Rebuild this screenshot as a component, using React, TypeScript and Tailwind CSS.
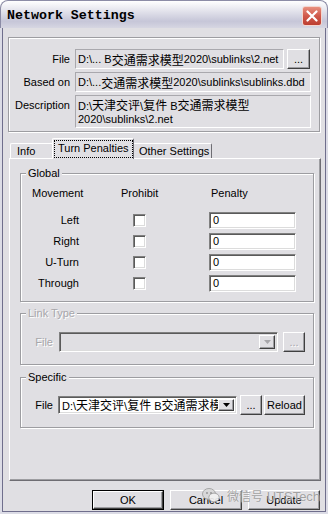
import React from "react";

type Kids = { children?: React.ReactNode; className?: string };

// CJK runs render a bit wider than the latin UI font, like the bitmap font in the dialog
function Z({ children }: Kids) {
  return <span className="text-[12px] font-['Noto_Sans_CJK_SC',sans-serif]">{children}</span>;
}

function RaisedBtn({ children, className = "", disabled = false }: Kids & { disabled?: boolean }) {
  return (
    <div
      className={`flex items-center justify-center border border-t-white border-l-white border-r-[#404040] border-b-[#404040] bg-[#e0dfe3] shadow-[inset_-1px_-1px_0_#9d9da1] ${
        disabled ? "text-[#a7a6aa] [text-shadow:1px_1px_0_#fff]" : "text-black"
      } ${className}`}
    >
      {children}
    </div>
  );
}

function Group({ label, disabled = false, className = "", children }: Kids & { label: string; disabled?: boolean }) {
  return (
    <div className={`relative border border-[#9d9da1] shadow-[inset_1px_1px_0_#fff,1px_1px_0_#fff] ${className}`}>
      <span
        className={`absolute left-[5px] top-[-8px] bg-[#e0dfe3] px-[2px] leading-[14px] ${
          disabled ? "text-[#a7a6aa] [text-shadow:1px_1px_0_#fff]" : "text-black"
        }`}
      >
        {label}
      </span>
      {children}
    </div>
  );
}

function DropArrow({ disabled = false }: { disabled?: boolean }) {
  return (
    <RaisedBtn className="h-full w-[16px] shrink-0">
      <svg width="7" height="4" viewBox="0 0 7 4">
        <path d="M0 0h7L3.5 4z" fill={disabled ? "#a7a6aa" : "#000"} />
      </svg>
    </RaisedBtn>
  );
}

const sunken =
  "border border-t-[#808080] border-l-[#808080] border-r-white border-b-white shadow-[inset_1px_1px_0_#5a5a5a,inset_-1px_-1px_0_#dcdcdc]";

const readonlyField = "border border-t-[#a9a8ad] border-l-[#a9a8ad] border-r-white border-b-white pl-[2px]";

const movements = ["Left", "Right", "U-Turn", "Through"];

export default function App() {
  return (
    <div className="relative flex h-[514px] w-[328px] flex-col font-['Liberation_Sans','Noto_Sans_CJK_SC',sans-serif] text-[11px] leading-[13px] text-black">
      {/* Title bar */}
      <div className="flex h-[28px] shrink-0 items-center justify-between rounded-t-[8px] border border-b-0 border-[#8c8ca6] bg-[linear-gradient(180deg,#ffffff_0%,#ececf2_25%,#c6c6d8_75%,#d6d6e2_100%)] pt-[3px] pl-[6px] pr-[5px]">
        <span className="font-['Liberation_Mono',monospace] text-[13.3px] font-bold leading-none">Network Settings</span>
        <div className="flex h-[20px] w-[20px] items-center justify-center rounded-[3px] border border-[#f3d6cf] bg-[linear-gradient(180deg,#e8907e_0%,#d0584a_50%,#bd3e30_100%)]">
          <svg width="12" height="12" viewBox="0 0 12 12">
            <path d="M1.5 1.5l9 9M10.5 1.5l-9 9" stroke="#fff" strokeWidth="2.2" strokeLinecap="round" />
          </svg>
        </div>
      </div>

      {/* Window frame + body */}
      <div className="flex-1 border-x-2 border-b-2 border-[#dcdce6] bg-[#e0dfe3]">
        <div className="flex h-full flex-col border-x border-b border-[#6f6e8c] bg-[#e0dfe3]">
          {/* Top info box */}
          <div className="mx-[5px] mt-[9px] flex h-[95px] flex-col gap-[3px] border border-[#9d9da1] pt-[11px] shadow-[inset_1px_1px_0_#fff,1px_1px_0_#fff]">
            <div className="flex h-[20px] items-center">
              <div className="w-[61px] text-right">File</div>
              <div className={`ml-[5px] flex h-[20px] w-[209px] items-center whitespace-nowrap ${readonlyField}`}>
                D:\... B<Z>交通需求模型</Z>2020\sublinks\2.net
              </div>
              <RaisedBtn className="ml-[3px] h-[20px] w-[23px]">...</RaisedBtn>
            </div>
            <div className="flex h-[20px] items-center">
              <div className="w-[61px] text-right">Based on</div>
              <div className={`ml-[5px] flex h-[20px] w-[236px] items-center whitespace-nowrap ${readonlyField}`}>
                D:\...<Z>交通需求模型</Z>2020\sublinks\sublinks.dbd
              </div>
            </div>
            <div className="flex h-[33px] items-start">
              <div className="w-[61px] pt-[4px] text-right">Description</div>
              <div className={`ml-[5px] h-[33px] w-[236px] pt-[2px] leading-[13px] ${readonlyField}`}>
                <div className="whitespace-nowrap">
                  D:\<Z>天津交评</Z>\<Z>复件</Z> B<Z>交通需求模型</Z>
                </div>
                <div>2020\sublinks\2.net</div>
              </div>
            </div>
          </div>

          {/* Tabs */}
          <div className="ml-[7px] mt-[6px] flex h-[20px] items-end">
            <div className="h-[15px] w-[42px] rounded-tl-[2px] border-l border-t border-white pl-[6px] pt-[1px]">Info</div>
            <div className="relative z-10 mb-[-1px] flex h-[21px] w-[82px] items-start rounded-t-[2px] border-x border-t border-l-white border-t-white border-r-[#6e6d73] bg-[#e0dfe3] pl-[1px] pt-[1px]">
              <span className="border border-dotted border-black px-[3px] pb-[2px] pt-[1px]">Turn Penalties</span>
            </div>
            <div className="h-[15px] w-[78px] rounded-tr-[2px] border-r border-t border-r-[#6e6d73] border-t-white pl-[5px] pt-[1px]">
              Other Settings
            </div>
          </div>

          {/* Tab panel */}
          <div className="ml-[6px] flex h-[323px] w-[312px] flex-col border-l border-t border-r border-b border-l-white border-t-white border-r-[#6e6d73] border-b-[#6e6d73] pl-[10px] pr-[6px] pt-[14px] shadow-[inset_-1px_-1px_0_#9d9da1]">
            <Group label="Global" className="pb-[9px] pt-[13px]">
              <div className="flex h-[13px] pl-[11px]">
                <span className="w-[89px]">Movement</span>
                <span className="w-[90px]">Prohibit</span>
                <span>Penalty</span>
              </div>
              <div className="mt-[12px] flex flex-col gap-[4px]">
                {movements.map((m) => (
                  <div key={m} className="flex h-[17px] items-center">
                    <div className="w-[58px] text-right">{m}</div>
                    <div className={`ml-[54px] h-[13px] w-[13px] bg-white ${sunken}`} />
                    <div className={`ml-[63px] flex h-[17px] w-[87px] items-center bg-white pl-[3px] ${sunken}`}>0</div>
                  </div>
                ))}
              </div>
            </Group>

            <Group label="Link Type" disabled className="mt-[11px] pb-[12px] pt-[18px]">
              <div className="flex h-[20px] items-center">
                <div className="w-[32px] text-right text-[#a7a6aa] [text-shadow:1px_1px_0_#fff]">File</div>
                <div className={`ml-[6px] flex h-[20px] w-[219px] justify-end p-[2px] ${sunken}`}>
                  <DropArrow disabled />
                </div>
                <RaisedBtn disabled className="ml-[5px] h-[20px] w-[22px]">
                  ...
                </RaisedBtn>
              </div>
            </Group>

            <Group label="Specific" className="mt-[12px] pb-[12px] pt-[17px]">
              <div className="flex h-[20px] items-center">
                <div className="w-[32px] text-right">File</div>
                <div className={`ml-[5px] flex h-[18px] w-[179px] items-center bg-white p-[2px] ${sunken}`}>
                  <div className="min-w-0 flex-1 overflow-hidden whitespace-nowrap pl-[1px]">
                    D:\<Z>天津交评</Z>\<Z>复件</Z> B<Z>交通需求模型</Z>2020
                  </div>
                  <DropArrow />
                </div>
                <RaisedBtn className="ml-[3px] h-[20px] w-[22px]">...</RaisedBtn>
                <RaisedBtn className="ml-[2px] h-[20px] w-[41px]">Reload</RaisedBtn>
              </div>
            </Group>
          </div>

          {/* Dialog buttons */}
          <div className="mt-[9px] flex justify-end gap-[6px] pr-[5px]">
            <div className="h-[20px] w-[72px] border border-black">
              <RaisedBtn className="h-full w-full">OK</RaisedBtn>
            </div>
            <RaisedBtn className="h-[20px] w-[72px]">Cancel</RaisedBtn>
            <RaisedBtn className="h-[20px] w-[72px]">Update</RaisedBtn>
          </div>
        </div>
      </div>

      {/* Watermark */}
      <div className="pointer-events-none absolute left-[202px] top-[488px] flex items-center gap-[7px] text-[13px] text-[#9c9c9c] opacity-90 [text-shadow:0_0_2px_#fff]">
        <svg width="18" height="15" viewBox="0 0 18 15">
          <ellipse cx="7" cy="6" rx="6.5" ry="5.5" fill="#d8d8d8" stroke="#a0a0a0" strokeWidth="1" />
          <ellipse cx="12" cy="9.5" rx="5.2" ry="4.4" fill="#f2f2f2" stroke="#a0a0a0" strokeWidth="1" />
          <circle cx="5" cy="5" r="0.9" fill="#888" />
          <circle cx="9" cy="5" r="0.9" fill="#888" />
        </svg>
        <span className="whitespace-nowrap">
          <Z>微信号</Z> UTSTech
        </span>
      </div>
    </div>
  );
}
